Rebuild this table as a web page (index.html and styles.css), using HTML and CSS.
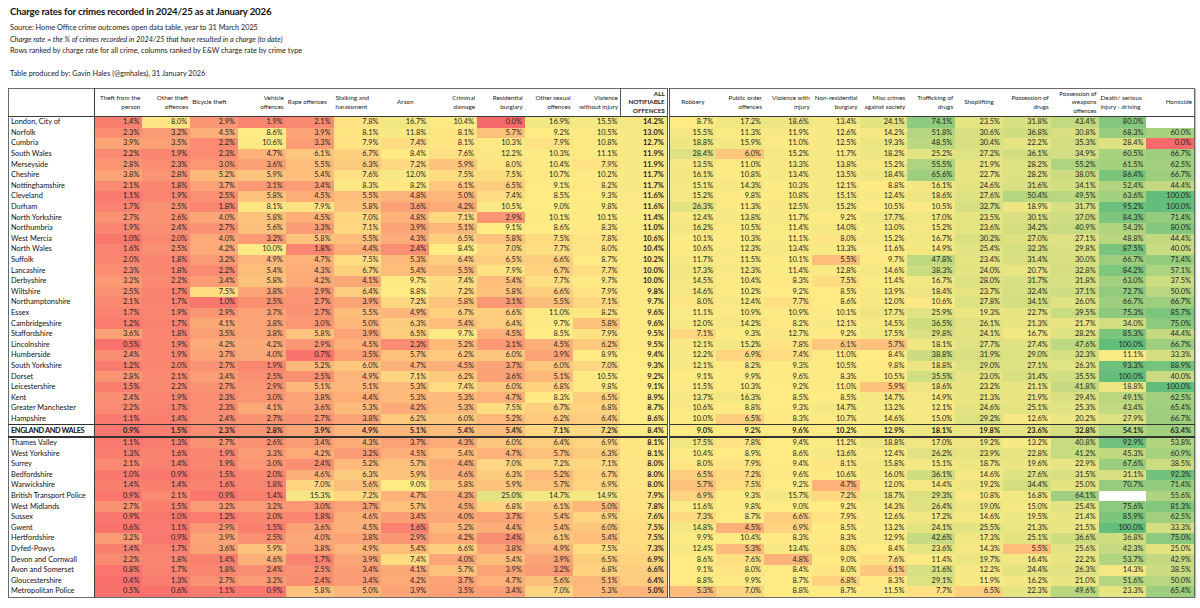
FILE: index.html
```html
<!DOCTYPE html>
<html lang="en">
<head>
<meta charset="utf-8">
<title>Charge rates</title>
<link rel="stylesheet" href="styles.css">
</head>
<body>
<div class="sheet">
  <header class="intro">
    <h1 class="title">Charge rates for crimes recorded in 2024/25 as at January 2026</h1>
    <p class="line src">Source: Home Office crime outcomes open data table, year to 31 March 2025</p>
    <p class="line em">Charge rate = the % of crimes recorded in 2024/25 that have resulted in a charge (to date)</p>
    <p class="line">Rows ranked by charge rate for all crime, columns ranked by E&amp;W charge rate by crime type</p>
    <p class="line credit">Table produced by: Gavin Hales (@gmhales), 31 January 2026</p>
  </header>
  <table class="grid">
    <colgroup><col class="c-name"><col span="23" class="c-val"></colgroup>
    <thead>
      <tr>
        <th class="corner"></th>
        <th class="r">Theft from the<br>person</th>
        <th class="r">Other theft<br>offences</th>
        <th class="l">Bicycle theft</th>
        <th class="r">Vehicle<br>offences</th>
        <th class="l">Rape offences</th>
        <th class="l">Stalking and<br>harassment</th>
        <th class="c">Arson</th>
        <th class="r">Criminal<br>damage</th>
        <th class="r">Residential<br>burglary</th>
        <th class="r">Other sexual<br>offences</th>
        <th class="r">Violence<br>without injury</th>
        <th class="r all">ALL<br>NOTIFIABLE<br>OFFENCES</th>
        <th class="c">Robbery</th>
        <th class="r">Public order<br>offences</th>
        <th class="r">Violence with<br>injury</th>
        <th class="r">Non-residential<br>burglary</th>
        <th class="r">Misc crimes<br>against society</th>
        <th class="r">Trafficking of<br>drugs</th>
        <th class="c">Shoplifting</th>
        <th class="r">Possession of<br>drugs</th>
        <th class="r">Possession of<br>weapons<br>offences</th>
        <th class="l">Death/ serious<br>injury - driving</th>
        <th class="r">Homicide</th>
      </tr>
    </thead>
    <tbody id="rows"></tbody>
  </table>
</div>
<script src="app.js"></script>
</body>
</html>
```

FILE: styles.css
```css
html, body {
  margin: 0;
  background: #ffffff;
}
body {
  font-family: Lato, "Open Sans", "Liberation Sans", sans-serif;
  color: #1a1a1a;
}
.sheet {
  padding-top: 4px;
}
.intro {
  padding-left: 10px;
}
.title {
  margin: 0;
  font-size: 9.7px;
  font-weight: 700;
  letter-spacing: -0.2px;
  line-height: 15px;
  color: #111;
}
.line {
  margin: 0;
  font-size: 7.3px;
  line-height: 11.5px;
}
.src {
  margin-top: 3px;
}
.em {
  font-style: italic;
}
.credit {
  margin-top: 11px;
}
.grid {
  margin: 9px 0 0 8px;
  width: 1187px;
  table-layout: fixed;
  border-collapse: collapse;
  border: 1px solid #6a6a6a;
  box-shadow: 1px 1px 1px rgba(0, 0, 0, 0.25);
}
.c-name {
  width: 86px;
}
.grid th {
  height: 27px;
  padding: 0 2px;
  font-size: 6.3px;
  font-weight: 400;
  line-height: 8.6px;
  color: #222;
  white-space: nowrap;
  vertical-align: middle;
  border-bottom: 1px solid #3c3c3c;
}
.grid th.r { text-align: right; }
.grid th.l { text-align: left; }
.grid th.c { text-align: center; }
.grid th.corner {
  border-right: 1px solid #3c3c3c;
}
.grid th.all {
  font-weight: 700;
  border-left: 1px solid #555;
  border-right: 3px double #555;
}
.grid td {
  height: 10.6px;
  padding: 0 3px 0 0;
  font-size: 7.4px;
  line-height: 10px;
  text-align: right;
  white-space: nowrap;
  overflow: hidden;
  color: #1f1f1f;
}
.grid td.name {
  padding: 0 0 0 2px;
  text-align: left;
  background: #ffffff;
  color: #111;
  border-right: 1px solid #3c3c3c;
}
.grid td.all {
  font-weight: 700;
  border-right: 3px double #555;
}
.grid tr.ew td {
  font-weight: 700;
  border-top: 1px solid #333;
  border-bottom: 2px solid #333;
}
.grid tr.ew td.name {
  letter-spacing: -0.4px;
}
```

FILE: app.js
```js
(function () {
  var RED = [248, 105, 107], YEL = [255, 235, 132], GRN = [99, 190, 123];
  var rows = [
    ["London, City of", "1.4 8.0 2.9 1.9 2.1 7.8 16.7 10.4 0.0 16.9 15.5 14.2 8.7 17.2 18.6 13.4 24.1 74.1 23.5 31.8 43.4 80.0 -"],
    ["Norfolk", "2.3 3.2 4.5 8.6 3.9 8.1 11.8 8.1 5.7 9.2 10.5 13.0 15.5 11.3 11.9 12.6 14.2 51.8 30.6 36.8 30.8 68.3 60.0"],
    ["Cumbria", "3.9 3.5 2.2 10.6 3.3 7.9 7.4 8.1 10.3 7.9 10.8 12.7 18.8 15.9 11.0 12.5 19.3 48.5 30.4 22.2 35.3 28.4 0.0"],
    ["South Wales", "2.2 1.9 2.3 4.7 6.1 6.7 8.4 7.6 12.2 10.3 11.1 11.9 28.4 6.0 15.2 11.7 18.2 25.2 27.2 36.1 34.9 60.5 66.7"],
    ["Merseyside", "2.8 2.3 3.0 3.6 5.5 6.3 7.2 5.9 8.0 10.4 7.9 11.9 13.5 11.0 13.3 13.8 15.2 55.5 21.9 28.2 55.2 61.5 62.5"],
    ["Cheshire", "3.8 2.8 5.2 5.9 5.4 7.6 12.0 7.5 7.5 10.7 10.2 11.7 16.1 10.8 13.4 13.5 18.4 65.6 22.7 28.2 38.0 86.4 66.7"],
    ["Nottinghamshire", "2.1 1.8 3.7 3.1 3.4 8.3 8.2 6.1 6.5 9.1 8.2 11.7 15.1 14.3 10.3 12.1 8.8 16.1 24.6 31.6 34.1 52.4 44.4"],
    ["Cleveland", "1.1 1.9 2.5 5.8 4.5 5.5 4.8 5.0 7.4 8.5 9.3 11.6 15.2 9.8 10.8 15.1 12.4 18.6 27.6 50.4 49.5 63.6 100.0"],
    ["Durham", "1.7 2.5 1.8 8.1 7.9 5.8 3.6 4.2 10.5 9.0 9.8 11.6 26.3 11.3 12.5 15.2 10.5 10.5 32.7 18.9 31.7 95.2 100.0"],
    ["North Yorkshire", "2.7 2.6 4.0 5.8 4.5 7.0 4.8 7.1 2.9 10.1 10.1 11.4 12.4 13.8 11.7 9.2 17.7 17.0 23.5 30.1 37.0 84.3 71.4"],
    ["Northumbria", "1.9 2.4 2.7 5.6 3.3 7.1 3.9 5.1 9.1 8.6 8.3 11.0 16.2 10.5 11.4 14.0 13.0 15.2 23.6 34.2 40.9 54.3 80.0"],
    ["West Mercia", "1.0 2.0 4.0 3.2 5.8 5.5 4.3 6.5 5.8 7.5 7.8 10.6 10.1 10.3 11.1 8.0 15.2 16.7 30.2 27.0 27.1 48.8 44.4"],
    ["North Wales", "1.6 2.5 4.2 10.0 1.8 4.4 2.4 8.4 7.0 7.7 8.0 10.4 10.6 12.3 13.4 13.3 11.6 14.9 25.4 32.3 29.8 87.5 40.0"],
    ["Suffolk", "2.0 1.8 3.2 4.9 4.7 7.5 5.3 6.4 6.5 6.6 8.7 10.2 11.7 11.5 10.1 5.5 9.7 47.8 23.4 31.4 30.0 66.7 71.4"],
    ["Lancashire", "2.3 1.8 2.2 5.4 4.3 6.7 5.4 5.5 7.9 6.7 7.7 10.0 17.3 12.3 11.4 12.8 14.6 38.3 24.0 20.7 32.8 84.2 57.1"],
    ["Derbyshire", "3.2 2.2 3.4 5.8 4.2 4.1 9.7 7.4 5.4 7.7 9.7 10.0 14.5 10.4 8.3 7.5 11.4 16.7 28.0 31.7 31.8 63.0 37.5"],
    ["Wiltshire", "2.5 1.7 7.5 3.8 2.9 6.4 8.8 7.2 5.8 6.6 7.9 9.8 14.6 10.2 9.2 8.5 13.9 18.4 23.7 32.4 37.1 72.7 50.0"],
    ["Northamptonshire", "2.1 1.7 1.0 2.5 2.7 3.9 7.2 5.8 3.1 5.5 7.1 9.7 8.0 12.4 7.7 8.6 12.0 10.6 27.8 34.1 26.0 66.7 66.7"],
    ["Essex", "1.7 1.9 2.9 3.7 2.7 5.5 4.9 6.7 6.6 11.0 8.2 9.6 11.1 10.9 10.9 10.1 17.7 25.9 19.3 22.7 39.5 75.3 85.7"],
    ["Cambridgeshire", "1.2 1.7 4.1 3.8 3.0 5.0 6.3 5.4 6.4 9.7 5.8 9.6 12.0 14.2 8.2 12.1 14.5 36.5 26.1 21.3 21.7 34.0 75.0"],
    ["Staffordshire", "3.6 1.8 3.5 3.8 5.8 3.9 6.5 9.7 4.5 8.5 7.9 9.5 7.1 9.3 12.7 9.2 17.5 29.8 24.1 16.7 28.2 85.3 44.4"],
    ["Lincolnshire", "0.5 1.9 4.2 4.2 2.9 4.5 2.3 5.2 3.1 4.5 6.2 9.5 12.1 15.2 7.8 6.1 5.7 18.1 27.7 27.4 47.6 100.0 66.7"],
    ["Humberside", "2.4 1.9 3.7 4.0 0.7 3.5 5.7 6.2 6.0 3.9 8.9 9.4 12.2 6.9 7.4 11.0 8.4 38.8 31.9 29.0 32.3 11.1 33.3"],
    ["South Yorkshire", "1.2 2.0 2.7 1.9 5.2 6.0 4.7 4.5 3.7 6.0 7.0 9.3 12.1 8.2 9.3 10.5 9.8 18.8 29.0 27.1 26.3 93.3 88.9"],
    ["Dorset", "2.8 2.1 3.4 2.5 2.5 4.9 7.1 6.2 3.6 5.1 10.5 9.2 9.1 9.9 9.6 8.3 10.5 35.5 23.0 31.4 35.5 100.0 40.0"],
    ["Leicestershire", "1.5 2.2 2.7 2.9 5.1 5.1 5.3 7.4 6.0 6.8 9.8 9.1 11.5 10.3 9.2 11.0 5.9 18.6 23.2 21.1 41.8 18.8 100.0"],
    ["Kent", "2.4 1.9 2.3 3.0 3.8 4.4 5.3 5.3 4.7 8.3 6.5 8.9 13.7 16.3 8.5 8.5 14.7 14.9 21.3 21.9 29.4 49.1 62.5"],
    ["Greater Manchester", "2.2 1.7 2.3 4.1 3.6 5.3 4.2 5.3 7.5 6.7 6.8 8.7 10.6 8.8 9.3 14.7 13.2 12.1 24.6 25.1 25.3 43.4 65.4"],
    ["Hampshire", "1.1 1.4 2.4 2.7 2.7 3.8 6.2 6.0 5.2 6.2 6.4 8.6 10.0 6.5 8.3 10.7 14.6 15.0 29.2 12.6 20.2 27.9 66.7"],
    ["ENGLAND AND WALES", "0.9 1.5 2.3 2.8 3.9 4.9 5.1 5.4 5.4 7.1 7.2 8.4 9.0 9.2 9.6 10.2 12.9 18.1 19.8 23.6 32.8 54.1 63.4"],
    ["Thames Valley", "1.1 1.3 2.7 2.6 3.4 4.3 3.7 4.3 6.0 6.4 6.9 8.1 17.5 7.8 9.4 11.2 18.8 17.0 19.2 13.2 40.8 92.9 53.8"],
    ["West Yorkshire", "1.3 1.6 1.9 3.3 4.2 3.2 4.5 5.4 4.7 5.7 6.3 8.1 10.4 8.9 8.6 13.6 12.4 26.2 23.9 22.8 41.2 45.3 60.9"],
    ["Surrey", "2.1 1.4 1.9 3.0 2.4 5.2 5.7 4.4 7.0 7.2 7.1 8.0 8.0 7.9 9.4 8.1 15.8 15.1 18.7 19.6 22.9 67.6 38.5"],
    ["Bedfordshire", "1.0 0.9 1.5 2.0 4.6 6.3 5.9 4.6 6.3 5.2 6.7 8.0 6.5 7.2 9.6 10.6 16.0 36.1 14.6 27.6 31.5 31.1 92.3"],
    ["Warwickshire", "1.4 1.4 1.6 1.8 7.0 5.6 9.0 5.8 5.9 5.7 6.9 8.0 5.7 7.5 9.2 4.7 12.0 14.4 19.2 34.4 25.0 70.7 71.4"],
    ["British Transport Police", "0.9 2.1 0.9 1.4 15.3 7.2 4.7 4.3 25.0 14.7 14.9 7.9 6.9 9.3 15.7 7.2 18.7 29.3 10.8 16.8 64.1 - 55.6"],
    ["West Midlands", "2.7 1.5 3.2 3.2 3.0 3.7 5.7 4.5 6.8 6.1 5.0 7.8 11.6 9.8 9.0 9.2 14.3 26.4 19.0 15.0 25.4 75.6 81.3"],
    ["Sussex", "0.9 1.0 1.2 2.0 1.8 4.6 3.4 4.0 3.7 5.4 6.9 7.6 7.3 8.7 6.6 7.9 12.6 17.2 14.6 19.5 21.4 85.9 62.5"],
    ["Gwent", "0.6 1.1 2.9 1.5 3.6 4.5 1.6 5.2 4.4 5.4 6.0 7.5 14.8 4.5 6.9 8.5 13.2 24.1 25.5 21.3 21.5 100.0 33.3"],
    ["Hertfordshire", "3.2 0.9 3.9 2.5 4.0 3.8 2.9 4.2 2.4 6.1 5.4 7.5 9.9 10.4 8.3 8.3 12.9 42.6 17.3 25.1 36.6 36.8 75.0"],
    ["Dyfed-Powys", "1.4 1.7 3.6 5.9 3.8 4.9 5.4 6.6 3.8 4.9 7.5 7.3 12.4 5.3 13.4 8.0 8.4 23.6 14.3 5.5 25.6 42.3 25.0"],
    ["Devon and Cornwall", "2.2 1.8 1.4 4.6 1.7 3.9 7.4 4.0 5.4 3.9 6.5 6.9 8.6 7.6 4.8 9.0 7.6 11.4 19.7 16.4 22.2 53.7 42.9"],
    ["Avon and Somerset", "0.8 1.7 1.8 2.4 2.5 3.4 4.1 5.7 3.9 3.2 6.8 6.6 9.1 8.0 8.4 8.0 6.1 31.6 12.2 24.4 26.3 14.3 38.5"],
    ["Gloucestershire", "0.4 1.3 2.7 3.2 2.4 3.4 4.2 3.7 4.7 5.6 5.1 6.4 8.8 9.9 8.7 6.8 8.3 29.1 11.9 16.2 21.0 51.6 50.0"],
    ["Metropolitan Police", "0.5 0.6 1.1 0.9 5.8 5.0 3.9 3.5 3.4 7.0 5.3 5.0 5.3 7.0 8.8 8.7 11.5 7.7 6.5 22.3 49.6 23.3 65.4"]
  ];

  var parsed = rows.map(function (r) {
    return [r[0], r[1].split(" ").map(function (s) { return s === "-" ? null : parseFloat(s); })];
  });
  var all = [];
  parsed.forEach(function (r) { r[1].forEach(function (v) { if (v !== null) all.push(v); }); });
  all.sort(function (a, b) { return a - b; });
  var n = all.length;
  var pos = (n - 1) * 0.5, lo = Math.floor(pos), hi = Math.ceil(pos);
  var mid = all[lo] + (all[hi] - all[lo]) * (pos - lo);
  var min = all[0], max = all[n - 1];

  function mix(a, b, t) {
    return "rgb(" + a.map(function (x, i) { return Math.round(x + (b[i] - x) * t); }).join(",") + ")";
  }
  function colour(v) {
    return v <= mid ? mix(RED, YEL, (v - min) / (mid - min)) : mix(YEL, GRN, (v - mid) / (max - mid));
  }

  var tb = document.getElementById("rows");
  parsed.forEach(function (r) {
    var tr = document.createElement("tr");
    if (r[0] === "ENGLAND AND WALES") tr.className = "ew";
    var name = document.createElement("td");
    name.className = "name";
    name.textContent = r[0];
    tr.appendChild(name);
    r[1].forEach(function (v, i) {
      var td = document.createElement("td");
      td.className = i === 11 ? "val all" : "val";
      if (v !== null) {
        td.textContent = v.toFixed(1) + "%";
        td.style.backgroundColor = colour(v);
      }
      tr.appendChild(td);
    });
    tb.appendChild(tr);
  });
})();
```
